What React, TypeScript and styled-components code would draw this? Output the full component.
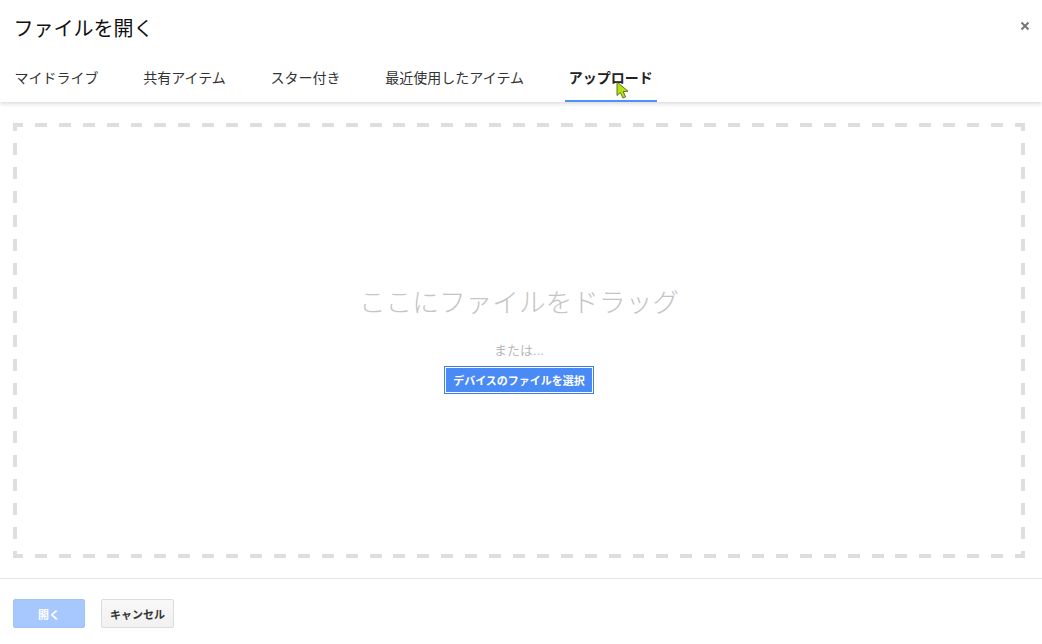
import React from "react";
import styled, { createGlobalStyle } from "styled-components";

const GlobalStyle = createGlobalStyle`
  html, body {
    margin: 0;
    padding: 0;
    background: #fff;
  }
  body {
    font-family: "Liberation Sans", "Noto Sans CJK JP", sans-serif;
  }
`;

const tabs = ["マイドライブ", "共有アイテム", "スター付き", "最近使用したアイテム", "アップロード"];

export default function App() {
  return (
    <Dialog>
      <GlobalStyle />
      <Header>
        <TitleRow>
          <Title>ファイルを開く</Title>
          <CloseIcon viewBox="0 0 10 10">
            <path d="M1.5 1.5 L8.5 8.5 M8.5 1.5 L1.5 8.5" />
          </CloseIcon>
        </TitleRow>
        <TabRow>
          {tabs.map((tab, index) => (
            <Tab key={tab} $active={index === tabs.length - 1}>
              {tab}
            </Tab>
          ))}
        </TabRow>
      </Header>
      <Body>
        <DropZone>
          <DragText>ここにファイルをドラッグ</DragText>
          <OrText>または...</OrText>
          <SelectButton>デバイスのファイルを選択</SelectButton>
        </DropZone>
      </Body>
      <Footer>
        <OpenButton>開く</OpenButton>
        <CancelButton>キャンセル</CancelButton>
      </Footer>
      <Cursor viewBox="0 0 14 18">
        <path
          d="M1 1 L1 14.5 L4.4 11.6 L6.9 17 L9.6 15.8 L7.2 10.6 L12 10.2 Z"
          fill="#b4e20a"
          stroke="#4a4f10"
          strokeWidth="0.8"
        />
      </Cursor>
    </Dialog>
  );
}

const Dialog = styled.div`
  position: relative;
  width: 1042px;
  height: 644px;
  overflow: hidden;
  background: #fff;
`;

const Header = styled.div`
  height: 102px;
  box-shadow: 0 2px 4px rgba(0, 0, 0, 0.14);
  position: relative;
`;

const TitleRow = styled.div`
  height: 56px;
  padding: 0 12px 0 13.5px;
  display: flex;
  align-items: center;
  justify-content: space-between;
`;

const Title = styled.h1`
  margin: 2px 0 0;
  font-size: 20px;
  font-weight: 400;
  color: #111;
  line-height: 24px;
`;

const CloseIcon = styled.svg`
  width: 10px;
  height: 10px;
  margin-top: -4px;

  path {
    stroke: #777;
    stroke-width: 2;
    fill: none;
  }
`;

const TabRow = styled.div`
  height: 46px;
  padding-left: 10.5px;
  display: flex;
  gap: 36.75px;
`;

const Tab = styled.div<{ $active: boolean }>`
  padding: 0 4px;
  font-size: 14px;
  line-height: 44px;
  color: ${(p) => (p.$active ? "#222" : "#333")};
  font-weight: ${(p) => (p.$active ? 700 : 400)};
  border-bottom: 2px solid ${(p) => (p.$active ? "#4d90fe" : "transparent")};
`;

const Body = styled.div`
  height: 477px;
  padding: 21px 17px 20px 13px;
  box-sizing: border-box;
  border-bottom: 1px solid #e5e5e5;
`;

const dash = "#dedede";

const DropZone = styled.div`
  height: 100%;
  display: flex;
  flex-direction: column;
  align-items: center;
  box-sizing: border-box;
  padding-top: 161px;
  background-image:
    repeating-linear-gradient(90deg, ${dash} 0 11.95px, transparent 11.95px 23.905px),
    repeating-linear-gradient(90deg, ${dash} 0 11.95px, transparent 11.95px 23.905px),
    repeating-linear-gradient(180deg, ${dash} 0 12px, transparent 12px 24px),
    repeating-linear-gradient(180deg, ${dash} 0 12px, transparent 12px 24px);
  background-size: calc(100% + 2px) 4px, calc(100% + 2px) 4px, 4px calc(100% + 4px), 4px calc(100% + 4px);
  background-position: -2px 0, -2px 100%, 0 -4px, 100% -4px;
  background-repeat: no-repeat;
`;

const DragText = styled.div`
  font-size: 26.7px;
  font-weight: 300;
  line-height: 38px;
  color: #c4c4c4;
  white-space: nowrap;
`;

const OrText = styled.div`
  margin-top: 19px;
  font-size: 13px;
  line-height: 20px;
  color: #b8b8b8;
`;

const SelectButton = styled.button`
  margin-top: 5px;
  height: 28px;
  width: 150px;
  padding: 0;
  font: 700 11px "Liberation Sans", "Noto Sans CJK JP", sans-serif;
  color: #fff;
  background: #4a8af4;
  border: 1px solid #3f80ea;
  box-shadow: inset 0 0 0 1px #fff;
  outline: none;
  white-space: nowrap;
`;

const Footer = styled.div`
  padding: 20px 13px 0;
  display: flex;
  gap: 16px;
`;

const OpenButton = styled.button`
  width: 72px;
  height: 29px;
  padding: 0;
  font: 700 11px "Liberation Sans", "Noto Sans CJK JP", sans-serif;
  color: #fff;
  background: #a6c8ff;
  border: 1px solid #a0c4fb;
  border-radius: 2px;
`;

const CancelButton = styled.button`
  width: 73px;
  height: 29px;
  padding: 0;
  font: 700 11px "Liberation Sans", "Noto Sans CJK JP", sans-serif;
  color: #333;
  background: linear-gradient(#f8f8f8, #f1f1f1);
  border: 1px solid #dcdcdc;
  border-radius: 2px;
`;

const Cursor = styled.svg`
  position: absolute;
  left: 616px;
  top: 81px;
  width: 14px;
  height: 18px;
`;
